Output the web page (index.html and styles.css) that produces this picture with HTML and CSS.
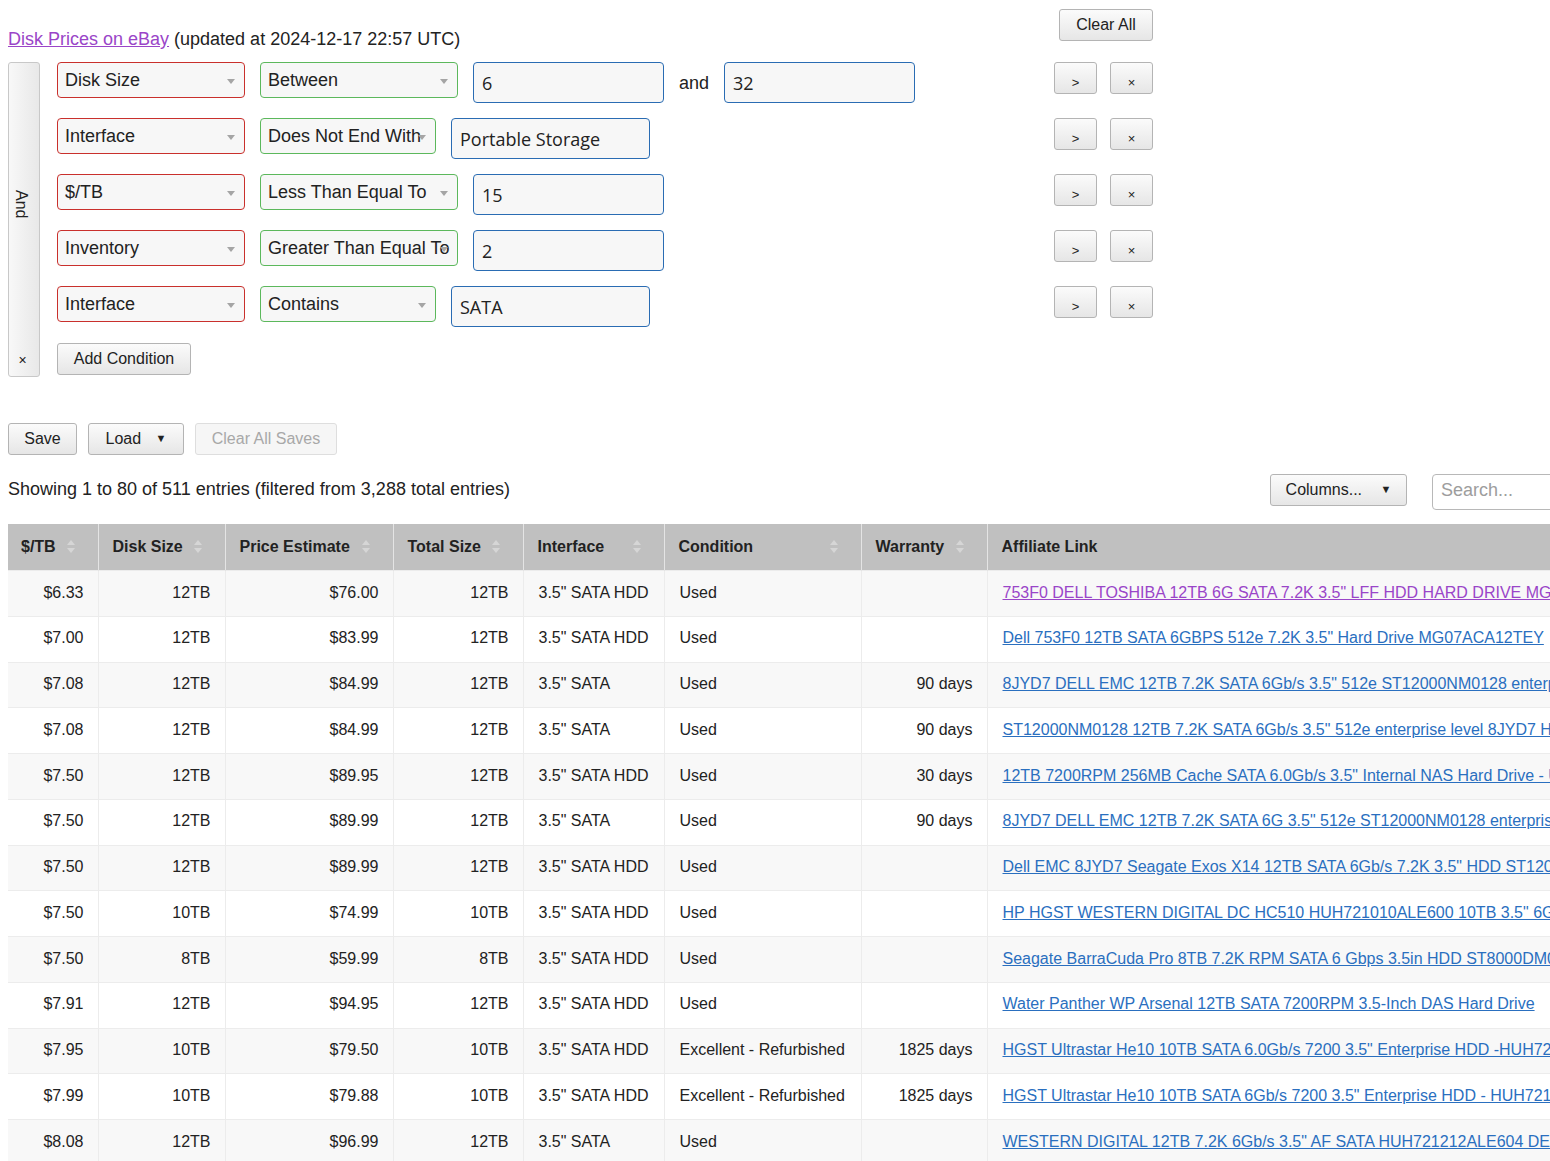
FILE: index.html
```html
<!DOCTYPE html>
<html>
<head>
<meta charset="utf-8">
<title>Disk Prices on eBay</title>
<link rel="stylesheet" href="styles.css">
</head>
<body>
<div class="header">
  <div class="title"><a class="visited" href="#">Disk Prices on eBay</a> (updated at 2024-12-17 22:57 UTC)</div>
  <button class="btn clear-all">Clear All</button>
</div>

<div class="builder">
  <div class="and-panel">
    <span class="and-label">And</span>
    <span class="and-x">×</span>
  </div>
  <div class="conditions">
    <div class="cond-row">
      <div class="cond-left">
        <div class="sel field-sel">Disk Size</div>
        <div class="sel op-sel w198">Between</div>
        <div class="txt w191">6</div>
        <span class="and-word">and</span>
        <div class="txt w191">32</div>
      </div>
      <div class="cond-btns"><button class="btn sm">&gt;</button><button class="btn sm">×</button></div>
    </div>
    <div class="cond-row">
      <div class="cond-left">
        <div class="sel field-sel">Interface</div>
        <div class="sel op-sel w176">Does Not End With</div>
        <div class="txt w199">Portable Storage</div>
      </div>
      <div class="cond-btns"><button class="btn sm">&gt;</button><button class="btn sm">×</button></div>
    </div>
    <div class="cond-row">
      <div class="cond-left">
        <div class="sel field-sel">$/TB</div>
        <div class="sel op-sel w198">Less Than Equal To</div>
        <div class="txt w191">15</div>
      </div>
      <div class="cond-btns"><button class="btn sm">&gt;</button><button class="btn sm">×</button></div>
    </div>
    <div class="cond-row">
      <div class="cond-left">
        <div class="sel field-sel">Inventory</div>
        <div class="sel op-sel w198">Greater Than Equal To</div>
        <div class="txt w191">2</div>
      </div>
      <div class="cond-btns"><button class="btn sm">&gt;</button><button class="btn sm">×</button></div>
    </div>
    <div class="cond-row">
      <div class="cond-left">
        <div class="sel field-sel">Interface</div>
        <div class="sel op-sel w176">Contains</div>
        <div class="txt w199">SATA</div>
      </div>
      <div class="cond-btns"><button class="btn sm">&gt;</button><button class="btn sm">×</button></div>
    </div>
    <button class="btn add-cond">Add Condition</button>
  </div>
</div>

<div class="saves">
  <button class="btn save">Save</button>
  <button class="btn load">Load <span class="caret">▼</span></button>
  <button class="btn disabled">Clear All Saves</button>
</div>

<div class="datatable">
 <div class="dt-inner">
  <div class="info-row">
    <div class="info">Showing 1 to 80 of 511 entries (filtered from 3,288 total entries)</div>
    <button class="btn columns">Columns... <span class="caret">▼</span></button>
    <div class="search">Search...</div>
  </div>
  <table class="grid">
    <colgroup>
      <col style="width:90px"><col style="width:127px"><col style="width:168px"><col style="width:130px"><col style="width:141px"><col style="width:197px"><col style="width:126px"><col>
    </colgroup>
    <thead>
      <tr>
        <th><div class="th-in"><span>$/TB</span><svg class="sort" viewBox="0 0 8 14" width="8" height="14"><path d="M4 0 L8 5 L0 5 Z M0 8 L8 8 L4 13 Z"/></svg></div></th>
        <th><div class="th-in"><span>Disk Size</span><svg class="sort" viewBox="0 0 8 14" width="8" height="14"><path d="M4 0 L8 5 L0 5 Z M0 8 L8 8 L4 13 Z"/></svg></div></th>
        <th><div class="th-in"><span>Price Estimate</span><svg class="sort" viewBox="0 0 8 14" width="8" height="14"><path d="M4 0 L8 5 L0 5 Z M0 8 L8 8 L4 13 Z"/></svg></div></th>
        <th><div class="th-in"><span>Total Size</span><svg class="sort" viewBox="0 0 8 14" width="8" height="14"><path d="M4 0 L8 5 L0 5 Z M0 8 L8 8 L4 13 Z"/></svg></div></th>
        <th><div class="th-in"><span>Interface</span><svg class="sort" viewBox="0 0 8 14" width="8" height="14"><path d="M4 0 L8 5 L0 5 Z M0 8 L8 8 L4 13 Z"/></svg></div></th>
        <th><div class="th-in"><span>Condition</span><svg class="sort" viewBox="0 0 8 14" width="8" height="14"><path d="M4 0 L8 5 L0 5 Z M0 8 L8 8 L4 13 Z"/></svg></div></th>
        <th><div class="th-in"><span>Warranty</span><svg class="sort" viewBox="0 0 8 14" width="8" height="14"><path d="M4 0 L8 5 L0 5 Z M0 8 L8 8 L4 13 Z"/></svg></div></th>
        <th><div class="th-in"><span>Affiliate Link</span></div></th>
      </tr>
    </thead>
    <tbody>
      <tr><td class="r">$6.33</td><td class="r">12TB</td><td class="r">$76.00</td><td class="r">12TB</td><td>3.5" SATA HDD</td><td>Used</td><td class="r"></td><td class="link"><a class="visited" href="#">753F0 DELL TOSHIBA 12TB 6G SATA 7.2K 3.5" LFF HDD HARD DRIVE MG07ACA12TEY</a></td></tr>
      <tr><td class="r">$7.00</td><td class="r">12TB</td><td class="r">$83.99</td><td class="r">12TB</td><td>3.5" SATA HDD</td><td>Used</td><td class="r"></td><td class="link"><a href="#">Dell 753F0 12TB SATA 6GBPS 512e 7.2K 3.5" Hard Drive MG07ACA12TEY</a></td></tr>
      <tr><td class="r">$7.08</td><td class="r">12TB</td><td class="r">$84.99</td><td class="r">12TB</td><td>3.5" SATA</td><td>Used</td><td class="r">90 days</td><td class="link"><a href="#">8JYD7 DELL EMC 12TB 7.2K SATA 6Gb/s 3.5" 512e ST12000NM0128 enterprise</a></td></tr>
      <tr><td class="r">$7.08</td><td class="r">12TB</td><td class="r">$84.99</td><td class="r">12TB</td><td>3.5" SATA</td><td>Used</td><td class="r">90 days</td><td class="link"><a href="#">ST12000NM0128 12TB 7.2K SATA 6Gb/s 3.5" 512e enterprise level 8JYD7 HDD</a></td></tr>
      <tr><td class="r">$7.50</td><td class="r">12TB</td><td class="r">$89.95</td><td class="r">12TB</td><td>3.5" SATA HDD</td><td>Used</td><td class="r">30 days</td><td class="link"><a href="#">12TB 7200RPM 256MB Cache SATA 6.0Gb/s 3.5" Internal NAS Hard Drive - Used</a></td></tr>
      <tr><td class="r">$7.50</td><td class="r">12TB</td><td class="r">$89.99</td><td class="r">12TB</td><td>3.5" SATA</td><td>Used</td><td class="r">90 days</td><td class="link"><a href="#">8JYD7 DELL EMC 12TB 7.2K SATA 6G 3.5" 512e ST12000NM0128 enterprise</a></td></tr>
      <tr><td class="r">$7.50</td><td class="r">12TB</td><td class="r">$89.99</td><td class="r">12TB</td><td>3.5" SATA HDD</td><td>Used</td><td class="r"></td><td class="link"><a href="#">Dell EMC 8JYD7 Seagate Exos X14 12TB SATA 6Gb/s 7.2K 3.5" HDD ST12000NM0128</a></td></tr>
      <tr><td class="r">$7.50</td><td class="r">10TB</td><td class="r">$74.99</td><td class="r">10TB</td><td>3.5" SATA HDD</td><td>Used</td><td class="r"></td><td class="link"><a href="#">HP HGST WESTERN DIGITAL DC HC510 HUH721010ALE600 10TB 3.5" 6G SATA</a></td></tr>
      <tr><td class="r">$7.50</td><td class="r">8TB</td><td class="r">$59.99</td><td class="r">8TB</td><td>3.5" SATA HDD</td><td>Used</td><td class="r"></td><td class="link"><a href="#">Seagate BarraCuda Pro 8TB 7.2K RPM SATA 6 Gbps 3.5in HDD ST8000DM0004</a></td></tr>
      <tr><td class="r">$7.91</td><td class="r">12TB</td><td class="r">$94.95</td><td class="r">12TB</td><td>3.5" SATA HDD</td><td>Used</td><td class="r"></td><td class="link"><a href="#">Water Panther WP Arsenal 12TB SATA 7200RPM 3.5-Inch DAS Hard Drive</a></td></tr>
      <tr><td class="r">$7.95</td><td class="r">10TB</td><td class="r">$79.50</td><td class="r">10TB</td><td>3.5" SATA HDD</td><td>Excellent - Refurbished</td><td class="r">1825 days</td><td class="link"><a href="#">HGST Ultrastar He10 10TB SATA 6.0Gb/s 7200 3.5" Enterprise HDD -HUH721010ALE600</a></td></tr>
      <tr><td class="r">$7.99</td><td class="r">10TB</td><td class="r">$79.88</td><td class="r">10TB</td><td>3.5" SATA HDD</td><td>Excellent - Refurbished</td><td class="r">1825 days</td><td class="link"><a href="#">HGST Ultrastar He10 10TB SATA 6Gb/s 7200 3.5" Enterprise HDD - HUH721010ALE600</a></td></tr>
      <tr><td class="r">$8.08</td><td class="r">12TB</td><td class="r">$96.99</td><td class="r">12TB</td><td>3.5" SATA</td><td>Used</td><td class="r"></td><td class="link"><a href="#">WESTERN DIGITAL 12TB 7.2K 6Gb/s 3.5" AF SATA HUH721212ALE604 DELL</a></td></tr>
      <tr><td class="r">$8.25</td><td class="r">12TB</td><td class="r">$98.99</td><td class="r">12TB</td><td>3.5" SATA HDD</td><td>Used</td><td class="r"></td><td class="link"><a href="#">HGST Ultrastar HC520 12TB SATA 6Gb/s 3.5" HDD HUH721212ALE600</a></td></tr>
    </tbody>
  </table>
 </div>
</div>
</body>
</html>
```

FILE: styles.css
```css
html {
  overflow: hidden;
}
body {
  margin: 8px 0 8px 8px;
  font-family: "Liberation Sans", Arial, sans-serif;
  color: #222;
  background: #fff;
}
a {
  color: #2a6fbf;
}
a.visited {
  color: #9a45c8;
}

.btn {
  font-family: "Liberation Sans", Arial, sans-serif;
  font-size: 16px;
  color: #222;
  background: linear-gradient(to bottom, #fbfbfb, #e6e6e6);
  border: 1px solid #b4b4b4;
  border-radius: 3px;
  height: 32px;
  padding: 0;
  box-sizing: border-box;
  cursor: pointer;
}
.btn.disabled {
  color: #a8a8a8;
  background: #f6f6f6;
  border-color: #dedede;
}

.header {
  display: flex;
  justify-content: space-between;
  align-items: flex-start;
  width: 1145px;
  height: 54px;
}
.title {
  margin-top: 21px;
  font-size: 18px;
  line-height: 21px;
}
.clear-all {
  margin-top: 1px;
  width: 94px;
}

.builder {
  display: flex;
  gap: 17px;
  align-items: flex-start;
}
.and-panel {
  width: 32px;
  height: 315px;
  box-sizing: border-box;
  border: 1px solid #c8c8c8;
  border-radius: 3px;
  background: linear-gradient(to right, #f8f8f8, #e8e8e8);
  display: flex;
  flex-direction: column;
  align-items: center;
}
.and-label {
  flex: 1;
  writing-mode: vertical-rl;
  font-size: 16px;
  display: flex;
  align-items: center;
  justify-content: center;
  padding-right: 7px;
  padding-bottom: 6px;
}
.and-x {
  font-size: 14px;
  line-height: 16px;
  margin-bottom: 8px;
  margin-right: 3px;
}

.conditions {
  width: 1096px;
  display: flex;
  flex-direction: column;
}
.cond-row {
  height: 56px;
  display: flex;
  justify-content: space-between;
  align-items: flex-start;
}
.cond-left {
  display: flex;
  align-items: flex-start;
  gap: 15px;
}
.cond-btns {
  display: flex;
  gap: 13px;
}
.btn.sm {
  width: 43px;
  font-size: 13px;
  padding-top: 9px;
}

.sel {
  position: relative;
  height: 36px;
  box-sizing: border-box;
  border: 1px solid #c9302c;
  border-radius: 4px;
  background: #f7f7f7;
  font-size: 18px;
  line-height: 34px;
  padding-left: 7px;
  white-space: nowrap;
  overflow: hidden;
}
.sel::after {
  content: "";
  position: absolute;
  right: 9px;
  top: 16px;
  border-left: 4px solid transparent;
  border-right: 4px solid transparent;
  border-top: 5px solid #a5a5a5;
}
.field-sel {
  width: 188px;
}
.op-sel {
  border-color: #5cb85c;
}
.w198 { width: 198px; }
.w176 { width: 176px; }

.txt {
  height: 41px;
  box-sizing: border-box;
  border: 1px solid #2a6cb3;
  border-radius: 4px;
  background: #f7f7f7;
  font-family: "Open Sans", "Noto Sans", sans-serif;
  font-size: 18px;
  line-height: 41px;
  padding-left: 8px;
}
.w191 { width: 191px; }
.w199 { width: 199px; }
.and-word {
  font-size: 18px;
  line-height: 42px;
}

.add-cond {
  margin-top: 1px;
  width: 134px;
  align-self: flex-start;
}

.saves {
  margin-top: 46px;
  display: flex;
  gap: 11px;
}
.save { width: 69px; }
.load { width: 96px; }
.saves .disabled { width: 142px; }
.caret {
  font-size: 11px;
  margin-left: 10px;
  position: relative;
  top: -2px;
}

.datatable {
  margin-top: 19px;
  overflow: hidden;
}
.dt-inner {
  width: 1680px;
  max-width: none;
}
.info-row {
  display: flex;
  align-items: flex-start;
  width: 1680px;
  max-width: none;
}
.info {
  flex: 1;
  font-size: 18px;
  line-height: 21px;
  margin-top: 5px;
}
.columns {
  width: 137px;
  margin-right: 25px;
}
.columns .caret {
  margin-left: 14px;
}
.search {
  width: 256px;
  height: 36px;
  box-sizing: border-box;
  border: 1px solid #b8b8b8;
  border-radius: 4px;
  font-size: 18px;
  line-height: 30px;
  padding-left: 8px;
  color: #9d9d9d;
}

.grid {
  margin-top: 14px;
  width: 1680px;
  max-width: none;
  table-layout: fixed;
  border-collapse: collapse;
  font-size: 16px;
}
.grid th {
  background: #c0c0c0;
  font-weight: bold;
  text-align: left;
  padding: 13px 14px 14px 14px;
  line-height: 19px;
  border-left: 1px solid #e4e4e4;
  color: #222;
}
.grid th:first-child {
  border-left: none;
  padding-left: 13px;
}
.th-in {
  display: flex;
  justify-content: space-between;
  align-items: center;
  padding-right: 9px;
}
.sort {
  fill: #d6d6d6;
}
.grid td {
  padding: 12.5px 14px 13.5px 15px;
  line-height: 18.75px;
  border-left: 1px solid #ececec;
  border-top: 1px solid #ececec;
  white-space: nowrap;
  overflow: hidden;
}
.grid td:first-child {
  border-left: none;
}
.grid td.r {
  text-align: right;
}
.grid tbody tr:nth-child(odd) td {
  background: #f8f8f8;
}
.grid tbody tr:nth-child(even) td {
  background: #fff;
}
```
